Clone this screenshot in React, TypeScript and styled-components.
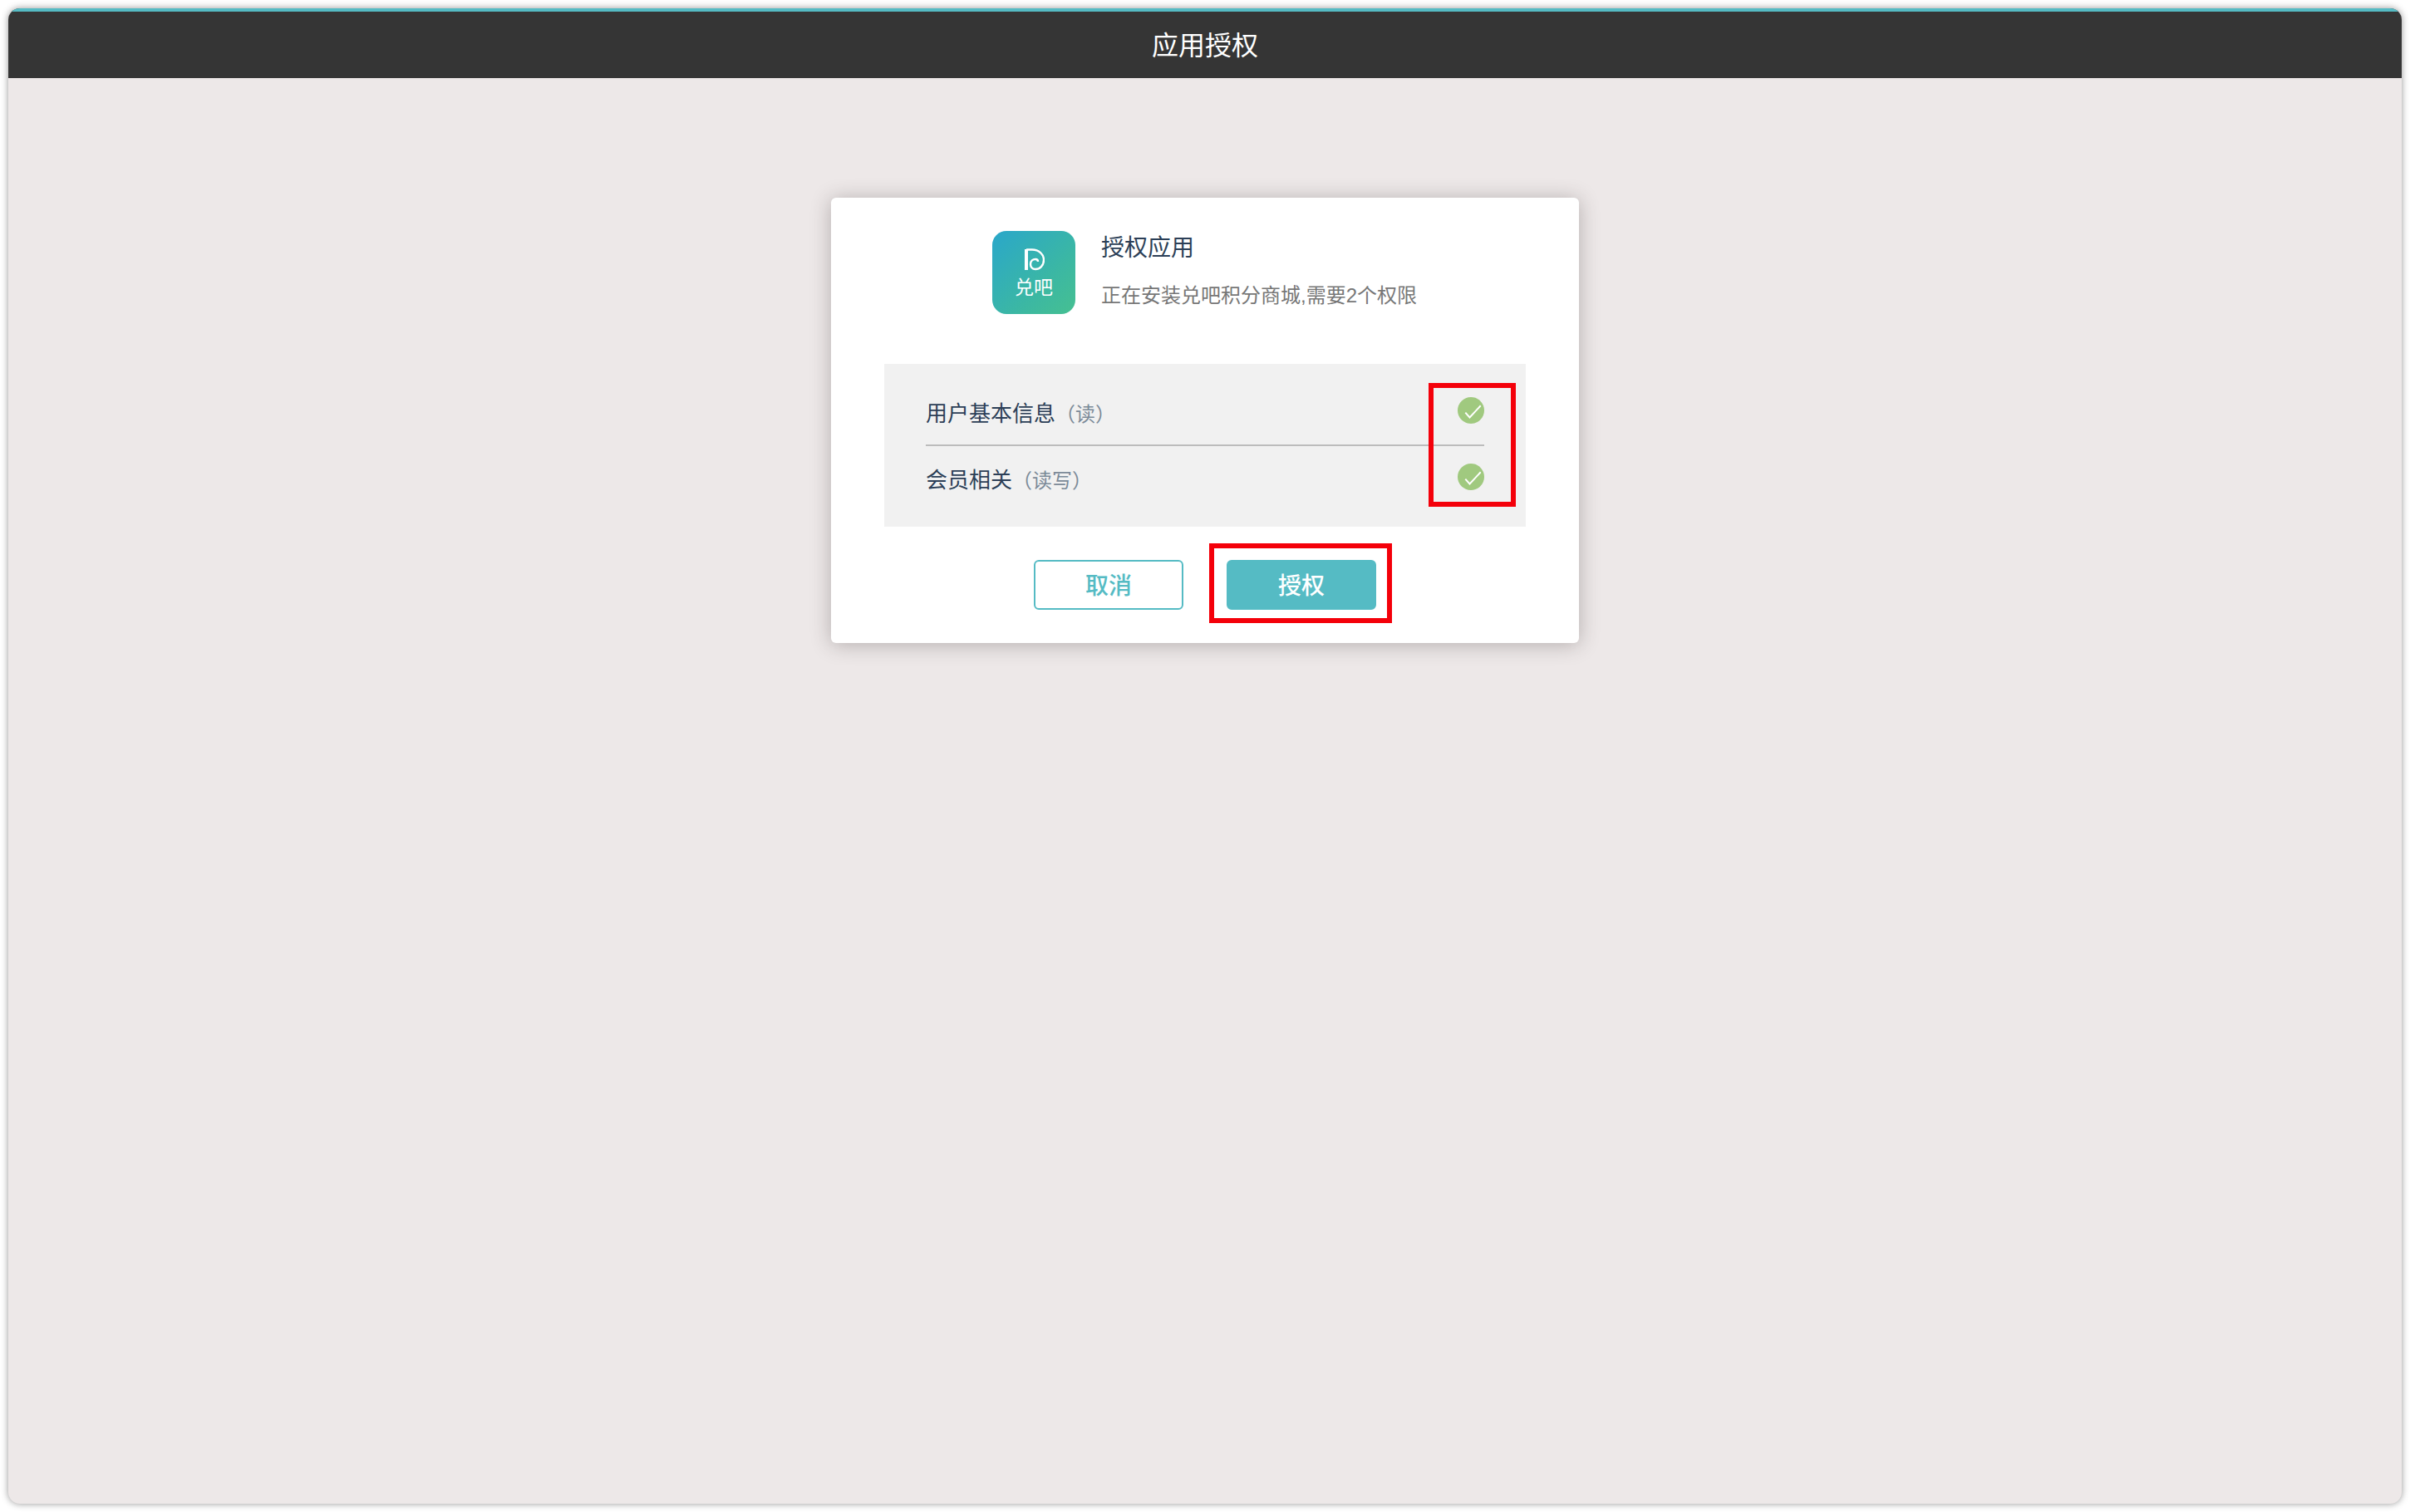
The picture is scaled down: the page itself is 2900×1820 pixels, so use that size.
import styled, { createGlobalStyle } from "styled-components";

const GlobalStyle = createGlobalStyle`
  html,
  body {
    margin: 0;
    padding: 0;
    background: #ffffff;
  }
  body {
    font-family: "Liberation Sans", "Noto Sans CJK SC", sans-serif;
  }
`;

const Page = styled.div`
  box-sizing: border-box;
  width: 2900px;
  height: 1820px;
  padding: 10px;
`;

const Window = styled.div`
  display: flex;
  flex-direction: column;
  height: 1800px;
  border-radius: 14px;
  overflow: hidden;
  background: #ede8e8;
  box-shadow: 0 0 8px rgba(0, 0, 0, 0.42);
`;

const Header = styled.header`
  box-sizing: border-box;
  display: flex;
  align-items: center;
  justify-content: center;
  height: 84px;
  padding-bottom: 4px;
  border-top: 4px solid #55bbc4;
  background: #353535;
  color: #ffffff;
  font-size: 32px;
`;

const Content = styled.main`
  display: flex;
  justify-content: center;
  padding-top: 144px;
`;

const Card = styled.section`
  box-sizing: border-box;
  width: 900px;
  height: 536px;
  padding-top: 40px;
  border-radius: 6px;
  background: #ffffff;
  box-shadow: 0 2px 24px rgba(60, 50, 50, 0.32);
`;

const AppInfo = styled.div`
  display: flex;
  gap: 31px;
  padding-left: 194px;
`;

const Logo = styled.div`
  box-sizing: border-box;
  display: flex;
  flex-direction: column;
  align-items: center;
  width: 100px;
  height: 100px;
  padding-top: 20px;
  border-radius: 17px;
  background: linear-gradient(135deg, #2aa7ca 0%, #3bb7a4 62%, #46c091 100%);
  color: #ffffff;
`;

const LogoMark = styled.svg`
  display: block;
  width: 26px;
  height: 28px;
`;

const LogoName = styled.span`
  margin-top: 8px;
  font-size: 23px;
  line-height: 24px;
`;

const AppText = styled.div`
  display: flex;
  flex-direction: column;
`;

const Title = styled.h1`
  margin: 0;
  padding-top: 1px;
  color: #2c3f57;
  font-size: 28px;
  font-weight: 400;
  line-height: 40px;
`;

const Subtitle = styled.p`
  margin: 19px 0 0;
  color: #777777;
  font-size: 24px;
  line-height: 36px;
`;

const Permissions = styled.div`
  position: relative;
  box-sizing: border-box;
  margin: 60px 64px 0;
  height: 196px;
  padding: 15px 50px 23px;
  background: #f1f1f1;
`;

const Permission = styled.div<{ $divided?: boolean }>`
  box-sizing: border-box;
  display: flex;
  align-items: center;
  justify-content: space-between;
  height: ${(props) => (props.$divided ? 84 : 74)}px;
  border-bottom: ${(props) => (props.$divided ? "2px solid #bcbcbc" : "none")};
`;

const PermissionName = styled.div`
  padding-top: 2px;
  color: #2c3f57;
  font-size: 26px;
`;

const Access = styled.span`
  color: #7b8a98;
  font-size: 24px;
`;

const CheckIcon = styled.svg`
  display: block;
  width: 32px;
  height: 32px;
`;

const Actions = styled.div`
  display: flex;
  justify-content: center;
  gap: 52px;
  margin-top: 40px;
`;

const Button = styled.button<{ $primary?: boolean }>`
  position: relative;
  box-sizing: border-box;
  width: 180px;
  height: 60px;
  padding: 0 0 2px;
  border: 2px solid #55bbc4;
  border-radius: 6px;
  background: ${(props) => (props.$primary ? "#55bbc4" : "#ffffff")};
  color: ${(props) => (props.$primary ? "#ffffff" : "#55bbc4")};
  font-family: inherit;
  font-size: 28px;
  font-weight: 500;
`;

const ChecksHighlight = styled.div`
  position: absolute;
  top: 23px;
  left: 655px;
  box-sizing: border-box;
  width: 105px;
  height: 149px;
  border: 6px solid #f4000a;
`;

const ButtonHighlight = styled.div`
  position: absolute;
  top: -22px;
  left: -23px;
  right: -21px;
  bottom: -18px;
  border: 6px solid #f4000a;
`;

function Check() {
  return (
    <CheckIcon viewBox="0 0 32 32">
      <circle cx="16" cy="16" r="16" fill="#a0c97f" />
      <path d="M9.3 18.7 L14.5 24.5 L27.7 10.3" fill="none" stroke="#ffffff" strokeWidth="2" />
    </CheckIcon>
  );
}

function App() {
  return (
    <Page>
      <GlobalStyle />
      <Window>
        <Header>应用授权</Header>
        <Content>
          <Card>
            <AppInfo>
              <Logo>
                <LogoMark viewBox="0 0 26 28" fill="none" stroke="#ffffff">
                  <path d="M4 27 V2" strokeWidth="4" />
                  <path d="M4 2.5 H11 C19 2.5 25 8 25 15 C25 22 20 26 15 26 C11 26 9 23 9 20 C9 16 12 14 15 14 C17 14 18 15 18 17" strokeWidth="2.4" />
                </LogoMark>
                <LogoName>兑吧</LogoName>
              </Logo>
              <AppText>
                <Title>授权应用</Title>
                <Subtitle>正在安装兑吧积分商城,需要2个权限</Subtitle>
              </AppText>
            </AppInfo>
            <Permissions>
              <Permission $divided>
                <PermissionName>
                  用户基本信息<Access>（读）</Access>
                </PermissionName>
                <Check />
              </Permission>
              <Permission>
                <PermissionName>
                  会员相关<Access>（读写）</Access>
                </PermissionName>
                <Check />
              </Permission>
              <ChecksHighlight />
            </Permissions>
            <Actions>
              <Button>取消</Button>
              <Button $primary>
                授权
                <ButtonHighlight />
              </Button>
            </Actions>
          </Card>
        </Content>
      </Window>
    </Page>
  );
}

export default App;
